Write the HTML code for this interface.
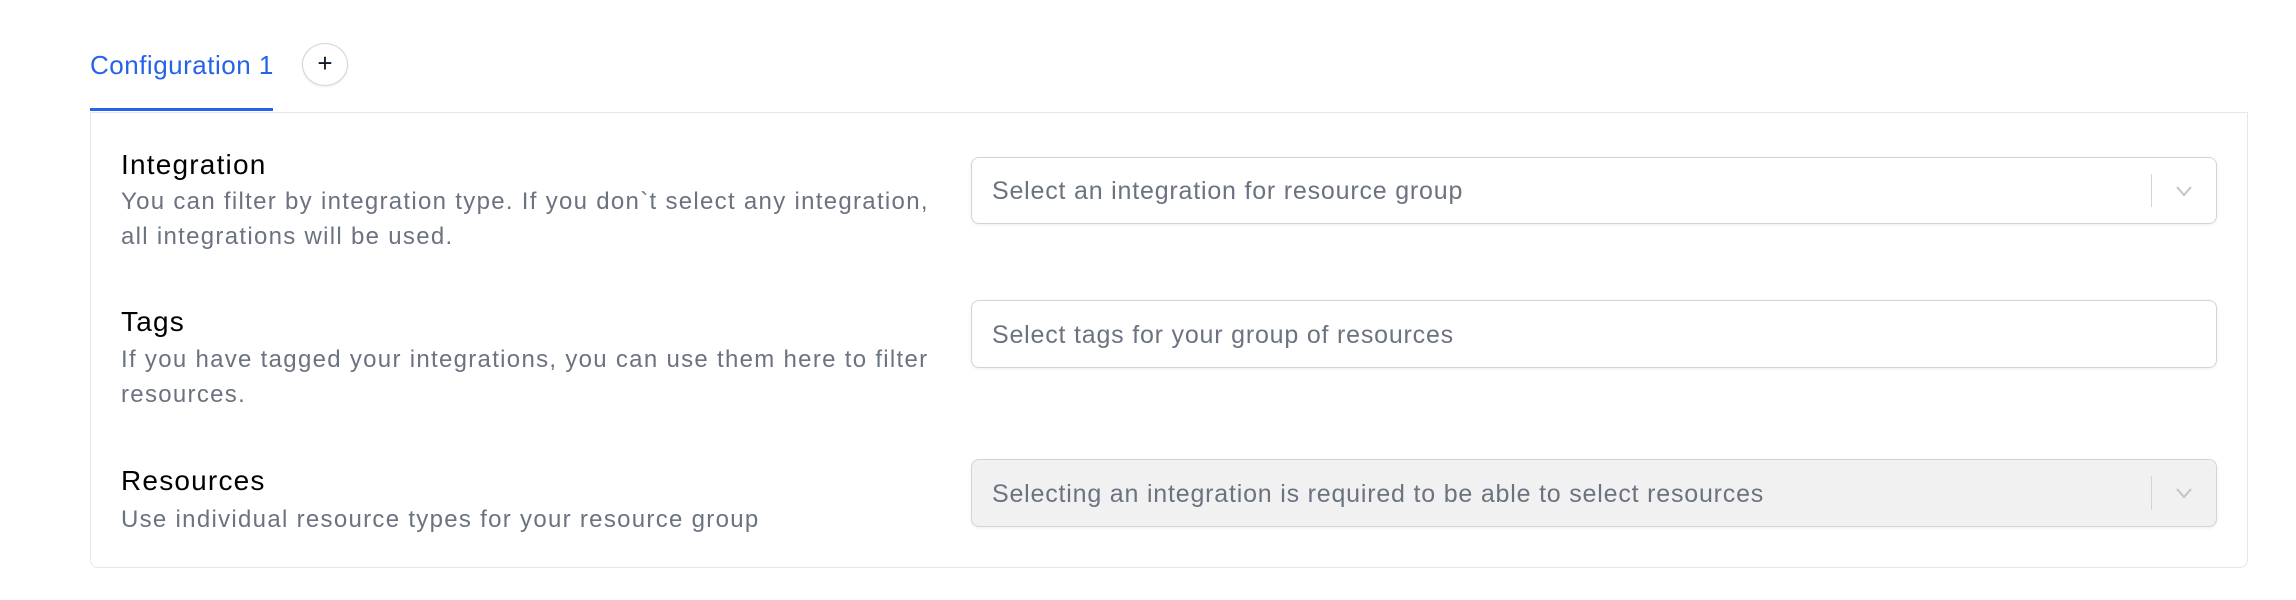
<!DOCTYPE html>
<html><head><meta charset="utf-8"><style>
*{box-sizing:border-box;margin:0;padding:0}
body{width:2296px;height:600px;background:#fff;font-family:"Liberation Sans",sans-serif;position:relative;overflow:hidden}
.abs{position:absolute;white-space:nowrap}
.tab{left:90px;top:50px;font-size:26px;color:#2563eb;letter-spacing:0.5px}
.ul{left:90px;top:108px;width:183px;height:3px;background:#2563eb}
.plus{left:302px;top:43px;width:46px;height:43px;border:1px solid #d1d5db;border-radius:50%;box-shadow:0 1px 2px rgba(0,0,0,.08);font-size:26px;line-height:39px;text-align:center;color:#111827}
.card{left:90px;top:112px;width:2158px;height:456px;border:1px solid #e5e7eb;border-radius:0 0 8px 8px}
.lbl{font-size:28px;color:#000;letter-spacing:1.2px}
.desc{font-size:24px;color:#6b7280;line-height:35px;letter-spacing:1.3px}
.sel{left:971px;width:1246px;border:1px solid #d1d5db;border-radius:8px;box-shadow:0 1px 3px rgba(0,0,0,.07);font-size:25px;letter-spacing:0.8px;color:#6b7280;padding-left:20px;padding-top:2px;display:flex;align-items:center}
.div{position:absolute;left:1179px;top:16px;bottom:16px;width:1px;background:#d1d5db}
.chev{position:absolute;left:1200px;top:50%;margin-top:-8px}
</style></head><body>
<div class="abs tab">Configuration 1</div>
<div class="abs ul"></div>
<div class="abs plus">+</div>
<div class="abs card"></div>

<div class="abs lbl" style="left:121px;top:149px">Integration</div>
<div class="abs desc" style="left:121px;top:184px">You can filter by integration type. If you don`t select any integration,<br>all integrations will be used.</div>
<div class="abs sel" style="top:157px;height:67px">Select an integration for resource group<div class="div"></div><svg class="chev" width="24" height="16" viewBox="0 0 24 16"><path d="M5 4l7 8 7-8" fill="none" stroke="#c4c4c4" stroke-width="2"/></svg></div>

<div class="abs lbl" style="left:121px;top:306px">Tags</div>
<div class="abs desc" style="left:121px;top:342px">If you have tagged your integrations, you can use them here to filter<br>resources.</div>
<div class="abs sel" style="top:300px;height:68px">Select tags for your group of resources</div>

<div class="abs lbl" style="left:121px;top:465px">Resources</div>
<div class="abs desc" style="left:121px;top:502px">Use individual resource types for your resource group</div>
<div class="abs sel" style="top:459px;height:68px;background:#f1f1f1">Selecting an integration is required to be able to select resources<div class="div"></div><svg class="chev" width="24" height="16" viewBox="0 0 24 16"><path d="M5 4l7 8 7-8" fill="none" stroke="#c4c4c4" stroke-width="2"/></svg></div>
</body></html>
